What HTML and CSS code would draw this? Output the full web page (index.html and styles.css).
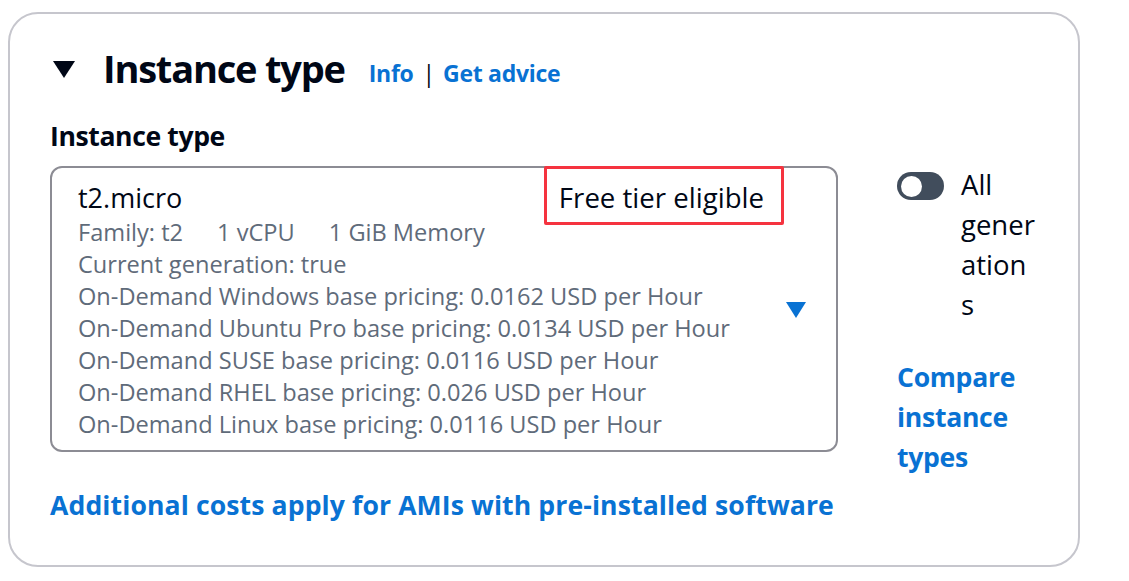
FILE: index.html
```html
<!DOCTYPE html>
<html lang="en">
<head>
<meta charset="utf-8">
<title>Instance type</title>
<link rel="stylesheet" href="styles.css">
</head>
<body>
<section class="card">
  <div class="header">
    <svg class="expand-icon" width="22" height="17" viewBox="0 0 22 17" aria-hidden="true"><path d="M0 0 H22 L11 17 Z" fill="#000716"/></svg>
    <h2 class="title">Instance type</h2>
    <span class="header-links"><a class="link info">Info</a><span class="sep">|</span><a class="link info">Get advice</a></span>
  </div>
  <div class="field-label">Instance type</div>
  <div class="field-row">
    <div class="select">
      <div class="option">
        <div class="option-top">
          <span class="option-label">t2.micro</span>
          <span class="tag">Free tier eligible</span>
        </div>
        <div class="desc desc-tags"><span>Family: t2</span><span>1 vCPU</span><span>1 GiB Memory</span></div>
        <div class="desc">Current generation: true</div>
        <div class="desc">On-Demand Windows base pricing: 0.0162 USD per Hour</div>
        <div class="desc">On-Demand Ubuntu Pro base pricing: 0.0134 USD per Hour</div>
        <div class="desc">On-Demand SUSE base pricing: 0.0116 USD per Hour</div>
        <div class="desc">On-Demand RHEL base pricing: 0.026 USD per Hour</div>
        <div class="desc">On-Demand Linux base pricing: 0.0116 USD per Hour</div>
      </div>
      <svg class="select-caret" width="20" height="16" viewBox="0 0 20 16" aria-hidden="true"><path d="M0 0 H20 L10 16 Z" fill="#0972d3"/></svg>
    </div>
    <div class="side">
      <div class="toggle-row">
        <span class="toggle"><span class="knob"></span></span>
        <span class="toggle-label">All generations</span>
      </div>
      <a class="link compare">Compare instance types</a>
    </div>
  </div>
  <a class="link bottom-link">Additional costs apply for AMIs with pre-installed software</a>
</section>
</body>
</html>
```

FILE: styles.css
```css
* { box-sizing: border-box; }
html, body { margin: 0; padding: 0; background: #ffffff; }
body { font-family: "Open Sans", "Noto Sans", sans-serif; color: #000716; }

.card {
  margin: 12px 0 0 8px;
  width: 1072px;
  border: 2px solid #c6c6cd;
  border-radius: 30px;
  padding: 31px 40px 44px 40px;
  display: flex;
  flex-direction: column;
  align-items: flex-start;
}

.header {
  display: flex;
  align-items: center;
  padding-left: 3px;
  height: 46px;
}
.expand-icon { margin-right: 28px; margin-top: 2px; }
.title {
  margin: 0;
  font-size: 38px;
  line-height: 46px;
  font-weight: 700;
  letter-spacing: -1.2px;
  color: #000716;
}
.header-links {
  display: flex;
  align-items: baseline;
  margin-left: 24px;
  margin-top: 10px;
  font-size: 23px;
  line-height: 30px;
}
.link { color: #0972d3; font-weight: 700; text-decoration: none; }
.info { letter-spacing: -0.3px; }
.sep { color: #000716; margin: 0 8px 0 9px; font-weight: 400; }

.field-label {
  margin-top: 29px;
  font-size: 26.6px;
  line-height: 32px;
  font-weight: 700;
  letter-spacing: -0.4px;
}

.field-row {
  margin-top: 14px;
  display: flex;
  align-items: flex-start;
}

.select {
  position: relative;
  width: 788px;
  height: 286px;
  border: 2px solid #8c8c94;
  border-radius: 12px;
  padding: 11px 30px 10px 26px;
  display: flex;
  align-items: center;
}
.option { flex: 1; align-self: flex-start; }
.option-top {
  display: flex;
  justify-content: space-between;
  align-items: baseline;
  font-size: 27px;
  line-height: 36px;
  padding-right: 22px;
}
.tag { position: relative; font-size: 27.6px; }
.tag::after {
  content: "";
  position: absolute;
  left: -15px;
  right: -20px;
  top: -13px;
  bottom: -10px;
  border: 3px solid #f5333f;
  border-radius: 2px;
}
.desc {
  font-size: 23.6px;
  line-height: 32px;
  color: #5f6b7a;
  white-space: nowrap;
}
.desc-tags { display: flex; gap: 34px; }
.select-caret { flex: none; }

.side {
  margin-left: 59px;
  margin-top: -1px;
  width: 142px;
  display: flex;
  flex-direction: column;
  align-items: flex-start;
}
.toggle-row { display: flex; align-items: flex-start; }
.toggle {
  flex: none;
  margin-top: 7px;
  width: 47px;
  height: 28px;
  border-radius: 14px;
  background: #414d5c;
  display: flex;
  align-items: center;
  padding-left: 4px;
}
.knob {
  width: 21px;
  height: 21px;
  border-radius: 50%;
  background: #ffffff;
}
.toggle-label {
  margin-left: 17px;
  width: 75px;
  font-size: 27.5px;
  line-height: 40px;
  overflow-wrap: anywhere;
}
.compare {
  margin-top: 32px;
  font-size: 26.6px;
  line-height: 40px;
  letter-spacing: -0.3px;
}

.bottom-link {
  margin-top: 12px;
  font-size: 26.6px;
  line-height: 32px;
  letter-spacing: 0.1px;
}
```
